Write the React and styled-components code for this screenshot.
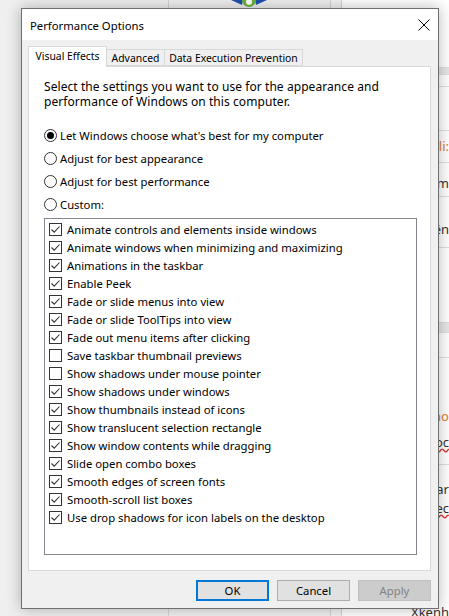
import React from "react";
import styled, { createGlobalStyle } from "styled-components";

const GlobalStyle = createGlobalStyle`
  * { box-sizing: border-box; }
  body {
    margin: 0;
    font-family: "Noto Sans", "Open Sans", sans-serif;
    font-size: 11.3px;
    color: #000;
  }
`;

const RADIOS = [
  { label: "Let Windows choose what's best for my computer", on: true },
  { label: "Adjust for best appearance", on: false },
  { label: "Adjust for best performance", on: false },
  { label: "Custom:", on: false }
];

const EFFECTS = [
  ["Animate controls and elements inside windows", true],
  ["Animate windows when minimizing and maximizing", true],
  ["Animations in the taskbar", true],
  ["Enable Peek", true],
  ["Fade or slide menus into view", true],
  ["Fade or slide ToolTips into view", true],
  ["Fade out menu items after clicking", true],
  ["Save taskbar thumbnail previews", false],
  ["Show shadows under mouse pointer", false],
  ["Show shadows under windows", true],
  ["Show thumbnails instead of icons", true],
  ["Show translucent selection rectangle", true],
  ["Show window contents while dragging", true],
  ["Slide open combo boxes", true],
  ["Smooth edges of screen fonts", true],
  ["Smooth-scroll list boxes", true],
  ["Use drop shadows for icon labels on the desktop", true]
];

// rows of the web page behind the dialog (only a sliver shows on the right)
const PAGE_ROWS = [
  { h: 68 },
  { h: 7, band: true },
  { h: 12 },
  { h: 44 },
  { h: 32, pt: 7, text: "Email li:", warm: true },
  { h: 34, pt: 12, text: "Form" },
  { h: 51, pt: 24, text: "Tên" },
  { h: 75 },
  { h: 10, band: true },
  { h: 25 },
  { h: 72, pt: 50, text: "Tên tệp no", warm: true, plain: true },
  { h: 35, pt: 4, text: "Tài liệu doc", wavy: true },
  { h: 35, pt: 16, text: "Thay đổi ar", plain: true },
  { h: 40, pt: 0, text: "Dịch vụ ec", wavy: true, plain: true },
  { h: 76, pt: 64, text: "Xkenh", plain: true }
];

const App = () => (
  <>
    <GlobalStyle />
    <Desktop>
      <BackArea />
      <BackWindow>
        <UserBadge width="40" height="8" viewBox="0 0 40 8">
          <path d="M2 0 L14 0 L13 5 Z" fill="#1f4fae" />
          <path d="M38 0 L26 0 L27 5 Z" fill="#1f4fae" />
          <circle cx="20" cy="0" r="7" fill="#6cb33f" />
          <circle cx="20" cy="2" r="3" fill="#ffffff" />
        </UserBadge>
      </BackWindow>
      <Gutter />
      <Page>
        {PAGE_ROWS.map((r, i) => (
          <PageRow key={i} $h={r.h} $pt={r.pt || 0} $band={r.band} $plain={r.plain}>
            {r.text && (
              <PageText $warm={r.warm} $wavy={r.wavy}>
                {r.text}
              </PageText>
            )}
          </PageRow>
        ))}
      </Page>

      <Dialog>
        <TitleBar>
          <Title>Performance Options</Title>
          <CloseButton>
            <svg width="12" height="12" viewBox="0 0 12 12">
              <path d="M0.5 0.5 L11.5 11.5 M11.5 0.5 L0.5 11.5" stroke="#000" strokeWidth="1" />
            </svg>
          </CloseButton>
        </TitleBar>
        <Body>
          <TabRow>
            <Tab $active $w={79}>Visual Effects</Tab>
            <Tab $w={58}>Advanced</Tab>
            <Tab $w={138}>Data Execution Prevention</Tab>
          </TabRow>
          <Panel>
            <Intro>
              Select the settings you want to use for the appearance and
              <br />
              performance of Windows on this computer.
            </Intro>
            <RadioGroup>
              {RADIOS.map((r) => (
                <RadioRow key={r.label}>
                  <RadioCircle>{r.on && <RadioDot />}</RadioCircle>
                  <span>{r.label}</span>
                </RadioRow>
              ))}
            </RadioGroup>
            <EffectList>
              {EFFECTS.map(([label, on]) => (
                <CheckRow key={label}>
                  <CheckBox>
                    {on && (
                      <svg width="11" height="11" viewBox="0 0 11 11">
                        <path d="M1.5 5.5 L4.2 8.2 L9.5 2.5" fill="none" stroke="#333" strokeWidth="1.1" />
                      </svg>
                    )}
                  </CheckBox>
                  <span>{label}</span>
                </CheckRow>
              ))}
            </EffectList>
          </Panel>
          <ButtonRow>
            <Button $primary>OK</Button>
            <Button>Cancel</Button>
            <Button $disabled>Apply</Button>
          </ButtonRow>
        </Body>
      </Dialog>
    </Desktop>
  </>
);

export default App;

const Desktop = styled.div`
  position: relative;
  width: 449px;
  height: 616px;
  overflow: hidden;
  display: flex;
  background: #f0f0f0;
`;

const BackArea = styled.div`
  width: 168px;
  background: #efefef;
`;

const BackWindow = styled.div`
  width: 163px;
  background: #f0f0f0;
  border-left: 1px solid #d4d4d4;
  border-right: 1px solid #d4d4d4;
  display: flex;
  justify-content: center;
`;

const UserBadge = styled.svg`
  display: block;
  margin-left: -2px;
`;

const Gutter = styled.div`
  width: 11px;
  background: #f3f3f3;
  border-right: 1px solid #d4d4d4;
`;

const Page = styled.div`
  flex: 1;
  background: #ffffff;
  display: flex;
  flex-direction: column;
`;

const PageRow = styled.div`
  height: ${(p) => p.$h}px;
  flex: none;
  background: ${(p) => (p.$band ? "#e6e6e6" : "#ffffff")};
  border-bottom: ${(p) => (p.$plain ? "none" : "1px solid #dedede")};
  padding-top: ${(p) => p.$pt}px;
  display: flex;
  align-items: flex-start;
  justify-content: flex-end;
  overflow: hidden;
  white-space: nowrap;
`;

const PageText = styled.span`
  font-family: "Noto Sans", sans-serif;
  font-size: 13px;
  line-height: 17px;
  color: ${(p) => (p.$warm ? "#d9822b" : "#333")};
  text-decoration: ${(p) => (p.$wavy ? "underline wavy #e03030" : "none")};
`;

const Dialog = styled.div`
  position: absolute;
  left: 21px;
  top: 8px;
  width: 418px;
  height: 601px;
  background: #f0f0f0;
  border: 1px solid #6f6f6f;
  box-shadow: 0 0 14px rgba(0, 0, 0, 0.28);
  display: flex;
  flex-direction: column;
`;

const TitleBar = styled.div`
  height: 31px;
  flex: none;
  background: #ffffff;
  display: flex;
  align-items: center;
  justify-content: space-between;
  padding: 0 8px 0 8px;
`;

const Title = styled.span`
  font-size: 11.3px;
  padding-top: 1px;
`;

const CloseButton = styled.span`
  display: flex;
  align-items: center;
`;

const Body = styled.div`
  flex: 1;
  display: flex;
  flex-direction: column;
  padding: 6px 7px 7px 6px;
`;

const TabRow = styled.div`
  height: 20px;
  display: flex;
  align-items: flex-end;
  position: relative;
  z-index: 1;
`;

const Tab = styled.div`
  width: ${(p) => p.$w}px;
  height: ${(p) => (p.$active ? 21 : 17)}px;
  margin-bottom: ${(p) => (p.$active ? -1 : 0)}px;
  background: ${(p) => (p.$active ? "#ffffff" : "#f0f0f0")};
  border: 1px solid #d9d9d9;
  border-bottom: ${(p) => (p.$active ? "none" : "1px solid #d9d9d9")};
  border-left: ${(p) => (p.$active ? "1px solid #d9d9d9" : "none")};
  display: flex;
  align-items: ${(p) => (p.$active ? "flex-start" : "center")};
  justify-content: center;
  padding-top: ${(p) => (p.$active ? 2 : 0)}px;
  font-size: 10.4px;
  white-space: nowrap;
`;

const Panel = styled.div`
  flex: 1;
  background: #ffffff;
  border: 1px solid #d9d9d9;
  display: flex;
  flex-direction: column;
  padding: 12px 13px 15px 15px;
`;

const Intro = styled.p`
  margin: 0;
  font-size: 12px;
  letter-spacing: 0.07px;
  line-height: 15px;
  white-space: nowrap;
`;

const RadioGroup = styled.div`
  display: flex;
  flex-direction: column;
  margin-top: 15px;
  margin-bottom: 2px;
`;

const RadioRow = styled.div`
  height: 23px;
  display: flex;
  align-items: center;
  gap: 3px;
`;

const RadioCircle = styled.span`
  width: 13px;
  height: 13px;
  border-radius: 50%;
  border: 1px solid #333;
  background: #fff;
  display: flex;
  align-items: center;
  justify-content: center;
`;

const RadioDot = styled.span`
  width: 7px;
  height: 7px;
  border-radius: 50%;
  background: #000;
`;

const EffectList = styled.div`
  flex: 1;
  border: 1px solid #828790;
  background: #ffffff;
  padding: 1px 4px;
  display: flex;
  flex-direction: column;
`;

const CheckRow = styled.div`
  height: 18px;
  flex: none;
  display: flex;
  align-items: center;
  gap: 5px;
  white-space: nowrap;
`;

const CheckBox = styled.span`
  width: 13px;
  height: 13px;
  border: 1px solid #333;
  background: #fff;
  display: flex;
  align-items: center;
  justify-content: center;
`;

const ButtonRow = styled.div`
  display: flex;
  justify-content: flex-end;
  gap: 8px;
  margin-top: 9px;
`;

const Button = styled.div`
  width: 73px;
  height: 21px;
  display: flex;
  align-items: center;
  justify-content: center;
  background: ${(p) => (p.$disabled ? "#cccccc" : "#e1e1e1")};
  color: ${(p) => (p.$disabled ? "#838383" : "#000")};
  border: ${(p) =>
    p.$primary ? "2px solid #0078d7" : p.$disabled ? "1px solid #bfbfbf" : "1px solid #adadad"};
`;
